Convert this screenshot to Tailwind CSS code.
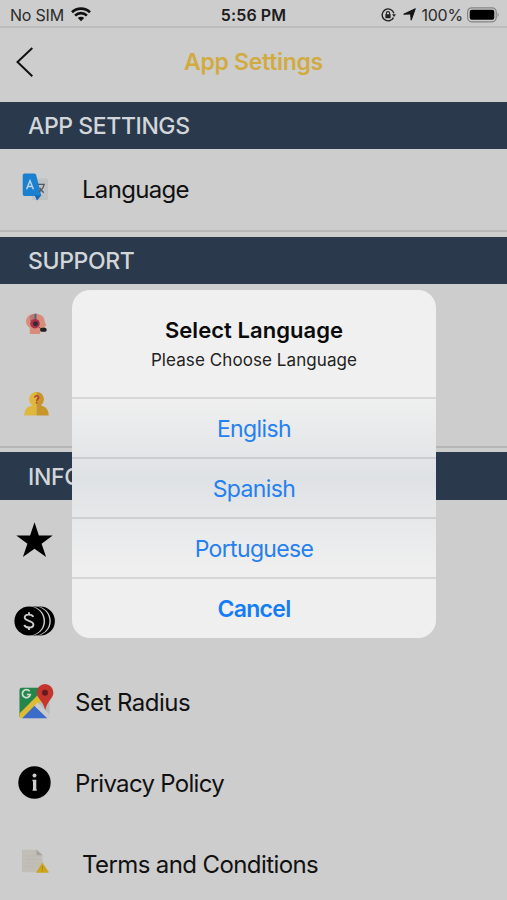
<!DOCTYPE html>
<html lang="en">
<head>
<meta charset="utf-8">
<title>App Settings</title>
<script src="https://cdn.jsdelivr.net/npm/@tailwindcss/browser@4"></script>
</head>
<body class="bg-[#cdcdcd]">
<div class="relative flex h-[900px] w-[507px] flex-col overflow-hidden bg-[#cdcdcd] font-['Inter','Liberation_Sans',sans-serif] text-[#111]">

  <!-- Status bar -->
  <div class="grid h-[28px] shrink-0 grid-cols-3 items-center border-b-2 border-[#bdbdbd] pt-[3px] text-[16px] leading-none">
    <div class="flex items-center gap-[7px] pl-[10px] text-[#2b2b2b]">
      <span class="tracking-[-0.2px]">No SIM</span>
      <svg class="h-[15px] w-[20px]" viewBox="0 0 20 15" fill="none" stroke="#111" stroke-width="2.7"><path d="M1 5.2A13 13 0 0 1 19 5.2M4.1 8.6a8.4 8.4 0 0 1 11.8 0"/><path d="M10 14.3 6.8 11.1a4.6 4.6 0 0 1 6.4 0z" fill="#111" stroke="none"/></svg>
    </div>
    <div class="text-center font-semibold tracking-[0.1px] text-[#1c1c1c]">5:56 PM</div>
    <div class="flex items-center justify-end pr-[7px] text-[#2b2b2b]">
      <svg class="mr-[7px] h-[14px] w-[15px]" viewBox="0 0 15 14" fill="none" stroke="#222" stroke-width="1.4"><path d="M12.9 5.2A6 6 0 1 0 12.5 9.6"/><path d="M11 6.2h4l-2 2.8z" fill="#222" stroke="none"/><rect x="4.4" y="6.2" width="5.2" height="4" fill="#222" stroke="none"/><path d="M5.4 6.4V5.2a1.6 1.6 0 0 1 3.2 0v1.2" stroke-width="1.1"/></svg>
      <svg class="mr-[5px] h-[13px] w-[13px]" viewBox="0 0 13 13" fill="#151515" stroke="#151515" stroke-width="1" stroke-linejoin="round"><path d="M12.3.7 8.2 12.2 7.6 6 .7 6.2z"/></svg>
      <span class="tracking-[-0.2px]">100%</span>
      <svg class="ml-[4px] h-[16px] w-[33px]" viewBox="0 0 33 16"><rect x=".6" y=".8" width="28.6" height="14" rx="4.2" fill="none" stroke="#858585" stroke-width="1.2"/><rect x="2.7" y="2.8" width="24.6" height="10" rx="2" fill="#000"/><path d="M30.6 5.5q2 2.3 0 4.8z" fill="#858585"/></svg>
    </div>
  </div>

  <!-- Navigation bar -->
  <div class="grid h-[74px] shrink-0 grid-cols-[60px_1fr_60px] items-center pb-[6px]">
    <svg class="ml-[16px] h-[32px] w-[18px]" viewBox="0 0 18 32" fill="none" stroke="#111" stroke-width="2"><path d="M16.3 2 1.5 16l14.8 14.2"/></svg>
    <h1 class="text-center text-[23px] font-semibold tracking-[-0.3px] text-[#d1ab42]">App Settings</h1>
  </div>

  <h2 class="flex h-[47px] shrink-0 items-center bg-[#2b394c] pt-[2px] pl-[28px] text-[23px] font-medium tracking-[-0.4px] text-[#d2d6da]">APP SETTINGS</h2>
  <div class="flex h-[83px] shrink-0 items-center border-b-2 border-[#b7b7b5] pl-[22px] text-[24px]">
    <svg class="mb-[5px] h-[28px] w-[27px]" viewBox="0 0 27 28"><rect x="10" y="5.5" width="16" height="21.5" rx="1.5" fill="#bfc1c2"/><path d="M2.5.5h9.7q1.5 0 2 1.5l5 20.3-4 5.2-1.8-4.5H2.5q-1.8 0-1.8-1.8V2.3Q.7.5 2.5.5z" fill="#1b80cf"/><path d="m12.8 22.3 6.4 0-4.4 5z" fill="#1769b8"/><path d="m4.6 16.2 3.4-8.4 3.4 8.4M5.9 13.4h4.2" fill="none" stroke="#b8d4e8" stroke-width="1.5"/><path d="M16 11.4h6.8M22 11.6q-1 5-4.9 7.2M17.6 14.6q2 3.8 4.2 5" fill="none" stroke="#51585e" stroke-width="1.3"/></svg>
    <span class="ml-[33px] pt-[1px] tracking-[-0.7px]">Language</span>
  </div>

  <h2 class="mt-[5px] flex h-[47px] shrink-0 items-center bg-[#2b394c] pt-[2px] pl-[28px] text-[23px] font-medium tracking-[-0.35px] text-[#d2d6da]">SUPPORT</h2>
  <div class="h-[164px] shrink-0 border-b-2 border-[#b5b5b5] pl-[24px]">
    <div class="flex h-[81px] items-center">
      <svg class="mb-[2px] ml-[1px] h-[22px] w-[23px]" viewBox="0 0 23 22"><path d="M1 8.5C1.3 3.5 5 .8 10.5.8c6 0 9.2 3.7 9.2 7.7l1.5 4-1.4.8v4.3h-4.6V21H4.8v-6.2Q1 12.5 1 8.5z" fill="#d88d7b"/><path d="M4.7 3.5Q7 1 10.4.8V8H5z" fill="#b8777b"/><path d="M10.5.7v7.5" stroke="#576675" stroke-width="2"/><circle cx="10" cy="10.7" r="4.8" fill="#ad3046"/><circle cx="10.6" cy="10.7" r="2.5" fill="#352b38"/><path d="m12 12.5 5 4.2" stroke="#9b4650" stroke-width="1"/><rect x="15.3" y="14.8" width="6.2" height="4" rx="1.5" fill="#202024"/></svg>
    </div>
    <div class="flex h-[81px] items-center">
      <svg class="mb-[3px] h-[24px] w-[25px]" viewBox="0 0 25 24"><path d="M12.5 0a7.3 7.3 0 0 0-4.3 13.2C3.2 14.7.3 17.5.2 23.6h12.3z" fill="#dfb73d"/><path d="M12.5 0a7.3 7.3 0 0 1 4.3 13.2c5 1.5 7.9 4.3 8 10.4H12.5z" fill="#c8952a"/><path d="M10.6 5.6c.2-2.5 4-2.4 4 0 0 1.7-2 1.6-2 3.4" fill="none" stroke="#b73b32" stroke-width="1.5"/><circle cx="12.6" cy="10.7" r=".9" fill="#b73b32"/></svg>
    </div>
  </div>

  <h2 class="mt-[4px] flex h-[48px] shrink-0 items-center bg-[#2b394c] pt-[2px] pl-[28px] text-[23px] font-medium tracking-[-0.35px] text-[#d2d6da]">INFORMATION</h2>
  <div class="shrink-0 text-[24px]">
    <div class="flex h-[81px] items-center pl-[16px]">
      <svg class="mb-[1px] h-[36px] w-[37px]" viewBox="0 0 37 36"><path d="m18.5.3 4.4 13.2h13.8L25.6 21.8 30.1 35 18.5 26.7 6.9 35l4.5-13.2L.3 13.5h13.8z"/></svg>
    </div>
    <div class="flex h-[81px] items-center pl-[14px]">
      <svg class="mb-[2px] h-[30px] w-[42px]" viewBox="0 0 42 30"><circle cx="26.3" cy="15" r="14.6"/><circle cx="22.2" cy="15" r="14.6" fill="#cdcdcd"/><circle cx="20.8" cy="15" r="14.6"/><circle cx="16.5" cy="15" r="14.6" fill="#cdcdcd"/><circle cx="15" cy="15" r="14.6"/><path d="M19.3 10.9C17.8 7.7 10.5 7.8 10.7 11.7c.2 3.5 8.7 2.7 8.7 6.7 0 4-7.5 4.2-9.2.6M15 6.2v2.7M15 21v3" fill="none" stroke="#cdcdcd" stroke-width="1.9"/></svg>
    </div>
    <div class="flex h-[81px] items-center pl-[19px]">
      <svg class="mb-[3px] h-[35px] w-[35px]" viewBox="0 0 35 35"><rect x=".5" y="3.7" width="30" height="30.5" rx="2.2" fill="#b9babb"/><path d="M2.7 3.7h22L25 9 .5 33V5.9q0-2.2 2.2-2.2z" fill="#24864a"/><path d="m.5 29.5 20.8-21 5 5L4.7 34.2h-2Q.5 34.2.5 32z" fill="#dfba35"/><path d="m3.2 34.2 12.2-12.4 13 12.4z" fill="#3c6cc9"/><path d="m15.5 21.8 3.2-3.4 11.8 12v1.6q0 2.2-2.1 2.2z" fill="#c9cacb"/><path d="M10.6 7.3a4 4 0 1 0 .7 3.2H7.8" fill="none" stroke="#d1ddd3" stroke-width="1.7"/><path d="M26 .1a8.5 8.5 0 0 1 8.4 8.4c0 6.4-6.2 8-8.2 17.7C24.3 16.5 17.7 14.9 17.7 8.5A8.4 8.4 0 0 1 26 .1z" fill="#c3352d"/><circle cx="26" cy="8.8" r="3" fill="#611c1b"/></svg>
      <span class="ml-[21px] tracking-[-0.5px]">Set Radius</span>
    </div>
    <div class="flex h-[81px] items-center pl-[18px]">
      <svg class="mb-[2px] h-[33px] w-[33px]" viewBox="0 0 33 33"><circle cx="16.5" cy="16.5" r="16.2"/><circle cx="16.5" cy="9.6" r="2" fill="#cdcdcd"/><path d="M14.4 13.7h3.9v9.6h.5v1.5h-4.2v-1.5h.4v-8h-.6z" fill="#cdcdcd"/></svg>
      <span class="ml-[24px] tracking-[-0.7px]">Privacy Policy</span>
    </div>
    <div class="flex h-[81px] items-center pl-[21px]">
      <svg class="mb-[7px] h-[24px] w-[28px]" viewBox="0 0 28 24"><path d="M1 .8h15l5.5 5.5v17H1z" fill="#c0beb7"/><path d="M15.5.8v5.5h6z" fill="#a5a39d"/><path d="M4 7h10M4 10.5h13M4 14h11M4 17.5h9" stroke="#bab8b0" stroke-width="1"/><path d="M21.4 13.4 27.7 23q.1.8-.8.8H15.8q-.8 0-.5-.8z" fill="#cba61c"/><path d="M21.4 17v3.2M21.4 21.3v1" stroke="#a58725" stroke-width="1.1"/></svg>
      <span class="ml-[33px] tracking-[-0.6px]">Terms and Conditions</span>
    </div>
  </div>

  <!-- Language dialog -->
  <div role="dialog" class="absolute top-[290px] left-[72px] flex h-[348px] w-[364px] flex-col overflow-hidden rounded-[18px] bg-linear-to-b from-[#f0f0f0] from-30% via-[#dfe2e5] via-54% to-[#efefef] to-80% text-center text-[23px] text-[#2580f0]">
    <div class="flex h-[107px] shrink-0 flex-col pt-[26px]">
      <p class="text-[22px] leading-[29px] font-semibold tracking-[0.05px] text-[#0b0b0b]">Select Language</p>
      <p class="text-[17px] leading-[30px] tracking-[0.08px] text-[#222]">Please Choose Language</p>
    </div>
    <button class="h-[60px] shrink-0 border-t-2 border-black/10 pt-[2px] tracking-[-0.6px]">English</button>
    <button class="h-[60px] shrink-0 border-t-2 border-black/10 pt-[2px] tracking-[-0.6px]">Spanish</button>
    <button class="h-[60px] shrink-0 border-t-2 border-black/10 pt-[2px] tracking-[-0.65px]">Portuguese</button>
    <button class="h-[61px] shrink-0 border-t-2 border-black/10 pt-[1px] font-semibold tracking-[-0.7px] text-[#147df5]">Cancel</button>
  </div>
</div>
</body>
</html>
